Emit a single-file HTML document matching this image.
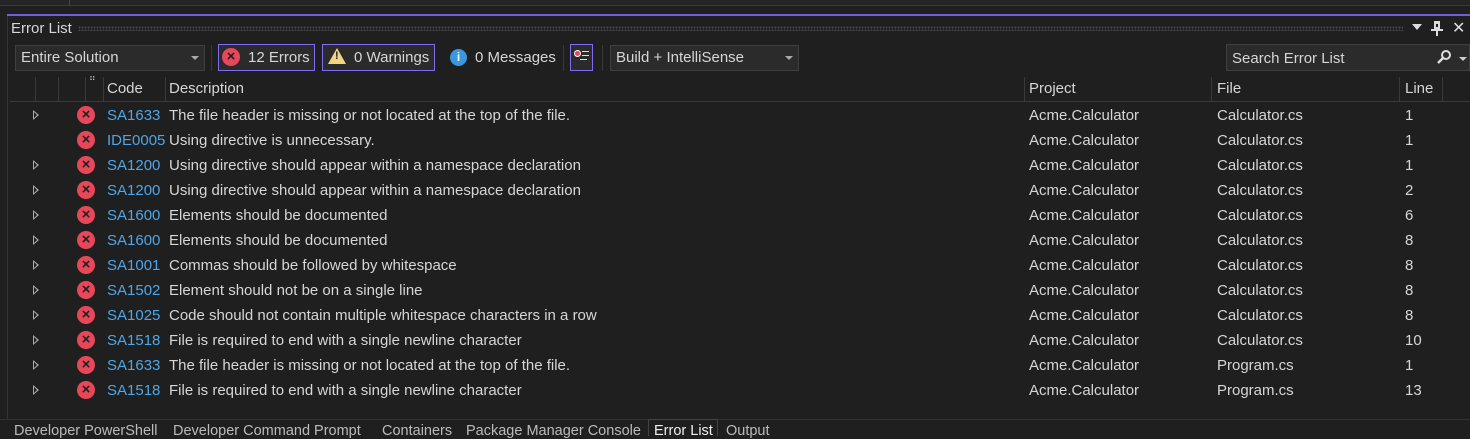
<!DOCTYPE html>
<html><head><style>
*{margin:0;padding:0;box-sizing:border-box}
body{width:1470px;height:436px;background:#1f1f1f;font-family:"Liberation Sans",sans-serif;font-size:15px;color:#d6d6d6;position:relative;overflow:hidden}
.a{position:absolute;white-space:nowrap}
.t{font-size:14.5px;top:423px}
.box{position:absolute;border:1px solid #3f3f3f;background:#2b2b2b}
.row{position:absolute;left:0;width:1470px;height:25px}
.row span{position:absolute;top:4px}
.code{color:#4da6e8}
.exp{position:absolute;left:33px;top:7px;width:0;height:0;border-left:6px solid #aaa;border-top:5px solid transparent;border-bottom:5px solid transparent}
.exp::after{content:"";position:absolute;left:-5px;top:-3px;border-left:3px solid #1f1f1f;border-top:3px solid transparent;border-bottom:3px solid transparent}
.err{position:absolute;left:77px;top:3px;width:18px;height:18px;border-radius:50%;background:#e8475a;color:#1f1f1f;font-size:15px;line-height:17px;text-align:center;font-weight:bold}
.hd{position:absolute;top:77px;height:24px;border-left:1px solid #3a3a3a}
</style></head><body>
<div class="a" style="left:0;top:0;width:1470px;height:6px;background:#252526;border-bottom:1px solid #3a3a3a"></div>
<div class="a" style="left:69px;top:0;width:1px;height:6px;background:#444"></div>
<div class="a" style="left:7px;top:14px;width:1463px;height:2px;background:#6f5fe0"></div>
<div class="a" style="left:7px;top:16px;width:1px;height:404px;background:#333"></div>
<div class="a" style="left:11px;top:20px">Error List</div>
<div class="a" style="left:78px;top:26px;width:1325px;height:5px;background-image:radial-gradient(#4a4a4a 40%,transparent 41%);background-size:3px 3px"></div>
<div class="a" style="left:1412px;top:24px;border-top:6px solid #ddd;border-left:5px solid transparent;border-right:5px solid transparent"></div>
<div class="a" style="left:1434px;top:21px;width:6px;height:8px;border:2px solid #ddd;border-top:3px solid #ddd"></div>
<div class="a" style="left:1431px;top:29px;width:12px;height:2px;background:#ddd"></div>
<div class="a" style="left:1436px;top:31px;width:2px;height:5px;background:#ddd"></div>
<div class="a" style="left:1452px;top:18px;font-size:16px;color:#ddd">✕</div>
<div class="box" style="left:15px;top:45px;width:190px;height:26px"></div>
<div class="a" style="left:21px;top:49px">Entire Solution</div>
<div class="a" style="left:191px;top:56px;border-top:4px solid #aaa;border-left:4px solid transparent;border-right:4px solid transparent"></div>
<div class="a" style="left:211px;top:45px;width:1px;height:26px;background:#3a3a3a"></div>
<div class="a" style="left:218px;top:44px;width:97px;height:27px;border:1px solid #7f6ff0;background:#2b2b2b"></div>
<div class="err" style="left:222px;top:48px">×</div>
<div class="a" style="left:248px;top:49px">12 Errors</div>
<div class="a" style="left:322px;top:44px;width:113px;height:27px;border:1px solid #7f6ff0;background:#2b2b2b"></div>
<div class="a" style="left:328px;top:48px;border-bottom:16px solid #f2d483;border-left:9px solid transparent;border-right:9px solid transparent"></div>
<div class="a" style="left:335px;top:50px;font-size:11px;font-weight:bold;color:#1f1f1f">!</div>
<div class="a" style="left:354px;top:49px">0 Warnings</div>
<div class="a" style="left:450px;top:49px;width:17px;height:17px;border-radius:50%;background:#3a96dd;color:#fff;font-size:12px;font-weight:bold;text-align:center;line-height:17px">i</div>
<div class="a" style="left:475px;top:49px">0 Messages</div>
<div class="a" style="left:563px;top:45px;width:1px;height:26px;background:#3a3a3a"></div>
<div class="a" style="left:570px;top:44px;width:23px;height:27px;border:1px solid #7f6ff0;background:#2b2b2b"></div>
<div class="a" style="left:574px;top:50px;width:7px;height:7px;border-radius:50%;background:#e8475a;border:1px solid #fff"></div>
<div class="a" style="left:582px;top:51px;width:7px;height:1px;background:#ddd;box-shadow:0 4px 0 #ddd,-2px 8px 0 #ddd"></div>
<div class="a" style="left:602px;top:45px;width:1px;height:26px;background:#3a3a3a"></div>
<div class="box" style="left:610px;top:45px;width:189px;height:26px"></div>
<div class="a" style="left:616px;top:49px">Build + IntelliSense</div>
<div class="a" style="left:785px;top:56px;border-top:4px solid #aaa;border-left:4px solid transparent;border-right:4px solid transparent"></div>
<div class="box" style="left:1226px;top:44px;width:244px;height:27px"></div>
<div class="a" style="left:1232px;top:50px">Search Error List</div>
<svg class="a" style="left:1436px;top:49px" width="16" height="16" viewBox="0 0 16 16"><circle cx="10" cy="6" r="4" fill="none" stroke="#ddd" stroke-width="2"/><line x1="7" y1="9" x2="2" y2="14" stroke="#ddd" stroke-width="2.5"/></svg>
<div class="a" style="left:1459px;top:57px;border-top:4px solid #ccc;border-left:4px solid transparent;border-right:4px solid transparent"></div>
<div class="hd" style="left:35px"></div><div class="hd" style="left:58px"></div><div class="hd" style="left:85px"></div><div class="hd" style="left:103px"></div><div class="hd" style="left:165px"></div><div class="hd" style="left:1024px"></div><div class="hd" style="left:1211px"></div><div class="hd" style="left:1399px"></div><div class="hd" style="left:1442px"></div>
<div class="a" style="left:10px;top:101px;width:1460px;height:1px;background:#3a3a3a"></div>
<div class="a" style="left:89px;top:75px;font-size:9px;color:#bbb">⠛</div>
<div class="a" style="left:107px;top:80px">Code</div>
<div class="a" style="left:169px;top:80px">Description</div>
<div class="a" style="left:1029px;top:80px">Project</div>
<div class="a" style="left:1217px;top:80px">File</div>
<div class="a" style="left:1405px;top:80px">Line</div>

<div class="row" style="top:103px"><div class="exp"></div><div class="err">×</div><span class="code" style="left:107px">SA1633</span><span style="left:169px">The file header is missing or not located at the top of the file.</span><span style="left:1029px">Acme.Calculator</span><span style="left:1217px">Calculator.cs</span><span style="left:1405px">1</span></div>
<div class="row" style="top:128px"><div class="err">×</div><span class="code" style="left:107px">IDE0005</span><span style="left:169px">Using directive is unnecessary.</span><span style="left:1029px">Acme.Calculator</span><span style="left:1217px">Calculator.cs</span><span style="left:1405px">1</span></div>
<div class="row" style="top:153px"><div class="exp"></div><div class="err">×</div><span class="code" style="left:107px">SA1200</span><span style="left:169px">Using directive should appear within a namespace declaration</span><span style="left:1029px">Acme.Calculator</span><span style="left:1217px">Calculator.cs</span><span style="left:1405px">1</span></div>
<div class="row" style="top:178px"><div class="exp"></div><div class="err">×</div><span class="code" style="left:107px">SA1200</span><span style="left:169px">Using directive should appear within a namespace declaration</span><span style="left:1029px">Acme.Calculator</span><span style="left:1217px">Calculator.cs</span><span style="left:1405px">2</span></div>
<div class="row" style="top:203px"><div class="exp"></div><div class="err">×</div><span class="code" style="left:107px">SA1600</span><span style="left:169px">Elements should be documented</span><span style="left:1029px">Acme.Calculator</span><span style="left:1217px">Calculator.cs</span><span style="left:1405px">6</span></div>
<div class="row" style="top:228px"><div class="exp"></div><div class="err">×</div><span class="code" style="left:107px">SA1600</span><span style="left:169px">Elements should be documented</span><span style="left:1029px">Acme.Calculator</span><span style="left:1217px">Calculator.cs</span><span style="left:1405px">8</span></div>
<div class="row" style="top:253px"><div class="exp"></div><div class="err">×</div><span class="code" style="left:107px">SA1001</span><span style="left:169px">Commas should be followed by whitespace</span><span style="left:1029px">Acme.Calculator</span><span style="left:1217px">Calculator.cs</span><span style="left:1405px">8</span></div>
<div class="row" style="top:278px"><div class="exp"></div><div class="err">×</div><span class="code" style="left:107px">SA1502</span><span style="left:169px">Element should not be on a single line</span><span style="left:1029px">Acme.Calculator</span><span style="left:1217px">Calculator.cs</span><span style="left:1405px">8</span></div>
<div class="row" style="top:303px"><div class="exp"></div><div class="err">×</div><span class="code" style="left:107px">SA1025</span><span style="left:169px">Code should not contain multiple whitespace characters in a row</span><span style="left:1029px">Acme.Calculator</span><span style="left:1217px">Calculator.cs</span><span style="left:1405px">8</span></div>
<div class="row" style="top:328px"><div class="exp"></div><div class="err">×</div><span class="code" style="left:107px">SA1518</span><span style="left:169px">File is required to end with a single newline character</span><span style="left:1029px">Acme.Calculator</span><span style="left:1217px">Calculator.cs</span><span style="left:1405px">10</span></div>
<div class="row" style="top:353px"><div class="exp"></div><div class="err">×</div><span class="code" style="left:107px">SA1633</span><span style="left:169px">The file header is missing or not located at the top of the file.</span><span style="left:1029px">Acme.Calculator</span><span style="left:1217px">Program.cs</span><span style="left:1405px">1</span></div>
<div class="row" style="top:378px"><div class="exp"></div><div class="err">×</div><span class="code" style="left:107px">SA1518</span><span style="left:169px">File is required to end with a single newline character</span><span style="left:1029px">Acme.Calculator</span><span style="left:1217px">Program.cs</span><span style="left:1405px">13</span></div>

<div class="a" style="left:0;top:419px;width:1470px;height:1px;background:#333"></div>
<div class="a" style="left:648px;top:419px;width:70px;height:17px;background:#1f1f1f;border:1px solid #444;border-bottom:none"></div>
<div class="a t" style="left:14px;color:#bbb">Developer PowerShell</div>
<div class="a t" style="left:173px;color:#bbb">Developer Command Prompt</div>
<div class="a t" style="left:382px;color:#bbb">Containers</div>
<div class="a t" style="left:466px;color:#bbb">Package Manager Console</div>
<div class="a t" style="left:654px;color:#eee">Error List</div>
<div class="a t" style="left:726px;color:#bbb">Output</div>
</body></html>
